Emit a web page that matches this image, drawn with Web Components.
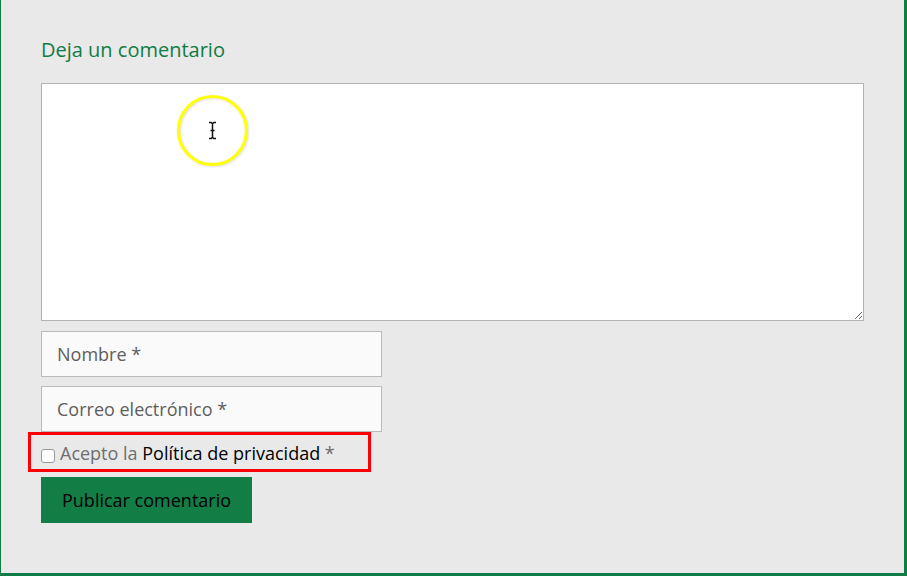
<!DOCTYPE html>
<html lang="es">
<head>
  <meta charset="utf-8">
  <meta name="viewport" content="width=device-width, initial-scale=1">
  <title>Deja un comentario</title>
  <style>
    body {
      margin: 0;
      font-family: "Open Sans", "Noto Sans", sans-serif;
      font-size: 18px;
      background-color: #e9e9e9;
    }
  </style>
</head>
<body>
  <comment-panel heading="Deja un comentario">
    <comment-box label="Comentario">
      <pointer-ring></pointer-ring>
    </comment-box>
    <text-field name="author" type="text" label="Nombre *"></text-field>
    <text-field name="email" type="email" label="Correo electrónico *"></text-field>
    <consent-check>Acepto la <a href="#privacidad">Política de privacidad</a> *</consent-check>
    <submit-button>Publicar comentario</submit-button>
  </comment-panel>

  <script>
    class CommentPanel extends HTMLElement {
      constructor() {
        super();
        this.attachShadow({ mode: 'open' });
      }

      connectedCallback() {
        this.shadowRoot.innerHTML = `
          <style>
            :host {
              display: block;
              box-sizing: border-box;
              min-height: 100vh;
              padding: 34px 40px 50px;
              border: solid #107c45;
              border-width: 0 3px 3px 1px;
              background-color: #e9e9e9;
            }

            h3 {
              margin: 0 0 17px;
              font-size: 20px;
              font-weight: 400;
              line-height: 32px;
              color: #107c45;
            }

            form {
              display: flex;
              flex-direction: column;
              align-items: flex-start;
            }
          </style>
          <h3>${this.getAttribute('heading')}</h3>
          <form><slot></slot></form>
        `;
      }
    }

    class CommentBox extends HTMLElement {
      constructor() {
        super();
        this.attachShadow({ mode: 'open' });
      }

      connectedCallback() {
        this.shadowRoot.innerHTML = `
          <style>
            :host {
              display: block;
              position: relative;
              width: 100%;
              margin-bottom: 10px;
            }

            textarea {
              display: block;
              box-sizing: border-box;
              width: 100%;
              height: 238px;
              margin: 0;
              padding: 10px 15px;
              border: 1px solid #b4b4b4;
              border-radius: 0;
              background-color: #fff;
              font: inherit;
              resize: vertical;
            }
          </style>
          <textarea aria-label="${this.getAttribute('label')}"></textarea>
          <slot></slot>
        `;
      }
    }

    // Text cursor with a highlight circle, floats over the textarea
    class PointerRing extends HTMLElement {
      constructor() {
        super();
        this.attachShadow({ mode: 'open' });
      }

      connectedCallback() {
        this.shadowRoot.innerHTML = `
          <style>
            :host {
              position: absolute;
              left: 132px;
              top: 8px;
              width: 80px;
              height: 80px;
              pointer-events: none;
            }

            svg {
              display: block;
            }

            .ring {
              filter: drop-shadow(1px 1px 1px rgba(0, 0, 0, 0.12));
            }
          </style>
          <svg width="80" height="80" viewBox="0 0 80 80" fill="none" aria-hidden="true">
            <circle class="ring" cx="39.5" cy="39.5" r="34" stroke="#ffff0a" stroke-width="3.2"/>
            <path d="M36 31.5h2.2l1.3 1.2 1.3-1.2H43M39.5 32.5v14M37.5 39.5h4M36 47.5h2.2l1.3-1.2 1.3 1.2H43" stroke="#111" stroke-width="1.5"/>
          </svg>
        `;
      }
    }

    class TextField extends HTMLElement {
      constructor() {
        super();
        this.attachShadow({ mode: 'open' });
      }

      connectedCallback() {
        const label = this.getAttribute('label');
        this.shadowRoot.innerHTML = `
          <style>
            :host {
              display: block;
              width: 341px;
              max-width: 100%;
            }

            :host(:not([type="email"])) {
              margin-bottom: 9px;
            }

            input {
              display: block;
              box-sizing: border-box;
              width: 100%;
              height: 46px;
              margin: 0;
              padding: 0 15px;
              border: 1px solid #bbb;
              border-radius: 0;
              background-color: #fafafa;
              font: inherit;
            }

            input::placeholder {
              color: #5e5e5e;
              opacity: 1;
            }
          </style>
          <input type="${this.getAttribute('type')}" name="${this.getAttribute('name')}" placeholder="${label}" aria-label="${label}">
        `;
      }
    }

    class ConsentCheck extends HTMLElement {
      constructor() {
        super();
        this.attachShadow({ mode: 'open' });
      }

      connectedCallback() {
        this.shadowRoot.innerHTML = `
          <style>
            :host {
              display: block;
              position: relative;
              width: 330px;
              max-width: 100%;
              margin-bottom: 5px;
              color: #6e6e6e;
            }

            /* Red frame around the whole row */
            :host::after {
              content: "";
              position: absolute;
              inset: 0 0 0 -13px;
              border: 3px solid #fb0007;
              pointer-events: none;
            }

            .row {
              display: flex;
              align-items: center;
              gap: 5px;
              height: 40px;
            }

            input {
              appearance: none;
              box-sizing: border-box;
              width: 14px;
              height: 14px;
              margin: 8px 0 0;
              border: 1px solid #999;
              border-radius: 3px;
              background-color: #fff;
            }

            input:checked {
              background-color: #107c45;
            }

            label {
              padding-top: 2px;
              line-height: 28px;
              white-space: nowrap;
            }

            ::slotted(a) {
              color: #000;
              text-decoration: none;
            }
          </style>
          <div class="row">
            <input type="checkbox" id="accept">
            <label for="accept"><slot></slot></label>
          </div>
        `;
      }
    }

    class SubmitButton extends HTMLElement {
      constructor() {
        super();
        this.attachShadow({ mode: 'open' });
      }

      connectedCallback() {
        this.shadowRoot.innerHTML = `
          <style>
            :host {
              display: block;
            }

            button {
              display: block;
              height: 46px;
              margin: 0;
              padding: 0 21px;
              border: 0;
              border-radius: 0;
              background-color: #127e46;
              color: #000;
              font: inherit;
            }
          </style>
          <button type="submit"><slot></slot></button>
        `;
      }
    }

    customElements.define('comment-panel', CommentPanel);
    customElements.define('comment-box', CommentBox);
    customElements.define('pointer-ring', PointerRing);
    customElements.define('text-field', TextField);
    customElements.define('consent-check', ConsentCheck);
    customElements.define('submit-button', SubmitButton);
  </script>
</body>
</html>
